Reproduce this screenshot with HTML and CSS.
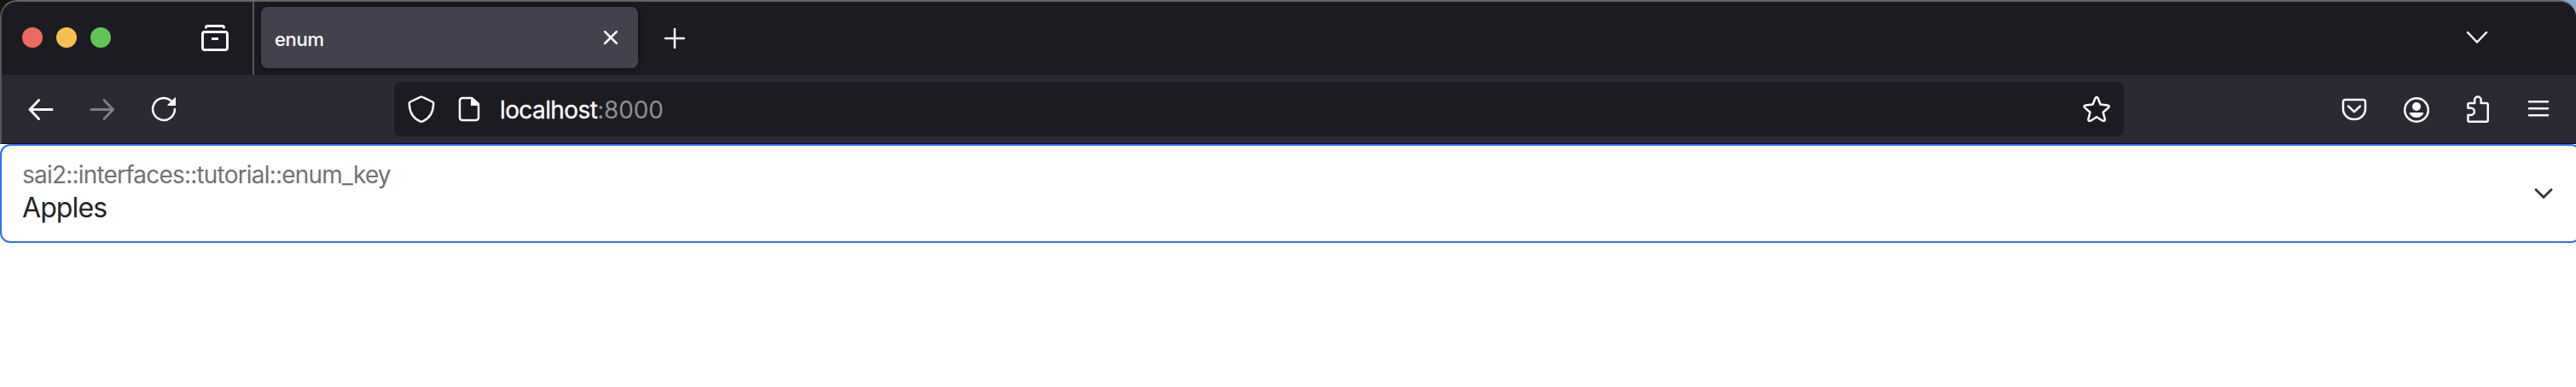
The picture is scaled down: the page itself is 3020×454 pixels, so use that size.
FILE: index.html
```html
<!DOCTYPE html>
<html lang="en">
<head>
<meta charset="utf-8">
<title>enum</title>
<link rel="stylesheet" href="styles.css">
</head>
<body>
<div class="browser">
  <header class="chrome">
    <div class="tabbar">
      <div class="lights"><i class="light red"></i><i class="light yellow"></i><i class="light green"></i></div>
      <svg class="icon library" viewBox="0 0 32 32"><path d="M5.500 4.200a1.800 1.800 0 0 1 1.800-1.700h17.400a1.800 1.800 0 0 1 1.800 1.700"/><rect x="1.500" y="9.500" width="29" height="21" rx="2.500"/><path class="butt" d="M12 17.500h8"/></svg>
      <div class="divider"></div>
      <div class="tab">
        <span class="tab-title">enum</span>
        <svg class="close" viewBox="0 0 16 16"><path d="M1 1l14 14M15 1L1 15"/></svg>
      </div>
      <svg class="plus" viewBox="0 0 24 24"><path d="M12 1v22M1 12h22"/></svg>
      <svg class="icon list" viewBox="0 0 32 32"><path d="M5 10l11 11.500L27 10"/></svg>
    </div>
    <nav class="navbar">
      <svg class="icon arrow" viewBox="0 0 32 32"><path d="M29 16.500H3M13.500 5.500L3 16.500L13.500 27.500"/></svg>
      <svg class="icon arrow disabled" viewBox="0 0 32 32"><path d="M3 16.500H28.500M18 5.500L28.500 16.500L18 27.500"/></svg>
      <svg class="icon reload" viewBox="0 0 32 32"><path d="M28.900 16A12.900 12.900 0 1 1 24.500 6.300"/><path class="solid" d="M30 2v10H21.500q-2 0-.6-1.500L28 3.500Q30 1.500 30 2z"/></svg>
      <div class="urlbar">
        <svg class="icon shield" viewBox="0 0 32 32"><path d="M16 1.500Q16.800 1.500 29 7.500Q30.500 8.500 30.200 10C29.800 19.500 25.500 27 17.500 30.300Q16 31 14.500 30.300C6.500 27 2.200 19.500 1.800 10Q1.500 8.500 3 7.500Q15.200 1.500 16 1.500z"/></svg>
        <svg class="icon doc" viewBox="0 0 32 32"><path d="M19 3H8a3 3 0 0 0-3 3v20a3 3 0 0 0 3 3h16a3 3 0 0 0 3-3V10z"/><path class="solid" d="M18 2.500v9.500h9.500v-2L20 2.500z"/></svg>
        <span class="url"><span class="host">localhost</span><span class="port">:8000</span></span>
        <svg class="icon star" viewBox="0 0 32 32"><path d="M14.400 3.200Q16 .600 17.600 3.200L20.500 10.500L28.800 11.400Q31.800 12 29.800 14.400L23.600 19.800L25.700 27.800Q26 30.900 23 29.700L16 25.200L9 29.700Q6 30.900 6.300 27.800L8.400 19.800L2.200 14.400Q.200 12 3.200 11.400L11.500 10.500z"/></svg>
      </div>
      <div class="actions">
        <svg class="icon" viewBox="0 0 32 32"><path d="M5.500 5h21A2.500 2.500 0 0 1 29 7.500V16A13 12 0 0 1 3 16V7.500A2.500 2.500 0 0 1 5.500 5z"/><path d="M9 12.500l7 6.700 7-6.700"/></svg>
        <svg class="icon" viewBox="0 0 32 32"><circle cx="17" cy="17" r="13.750"/><circle class="solid" cx="17" cy="13" r="5"/><path class="solid" d="M10 20h14q2 0 1 1.500Q22 26 17 26T9 21.500Q7.500 20 10 20z"/></svg>
        <svg class="icon" viewBox="0 0 32 32"><path d="M5.400 14.700V10.500A1.500 1.500 0 0 1 6.900 9H13.200V5.200a3.700 3.700 0 0 1 7.400 0V9H27.200A1.500 1.500 0 0 1 28.700 10.500V29.200A1.500 1.500 0 0 1 27.200 30.700H6.900A1.500 1.500 0 0 1 5.400 29.200V22.900H8.800a4.100 4.100 0 0 0 0-8.200z"/></svg>
        <svg class="icon menu" viewBox="0 0 32 32"><path d="M5 7.300h22M5 15.300h22M5 23.300h22"/></svg>
      </div>
    </nav>
  </header>
  <main class="page">
    <div class="select">
      <div class="field">
        <div class="label">sai2::interfaces::tutorial::enum_key</div>
        <div class="value">Apples</div>
      </div>
      <svg class="caret" viewBox="0 0 24 14"><path d="M3 2.500l9 9 9-9"/></svg>
    </div>
  </main>
</div>
</body>
</html>
```
FILE: styles.css
```css
* { box-sizing: border-box; }
body { margin: 0; background: #fff; font-family: Inter, "Liberation Sans", sans-serif; overflow: hidden; }
.browser { width: 3020px; height: 454px; overflow: hidden; background: linear-gradient(90deg, #14130c 50%, #86abd3 50%) 0 0 / 100% 60px no-repeat #fff; }
.chrome { height: 169px; border: 2px solid #56555b; border-top-color: #656568; border-right: 0; border-bottom: 1px solid #0c0c0d; border-radius: 20px 20px 0 0; background: #2b2a33; overflow: hidden; }
svg { display: block; flex: none; fill: none; stroke: #fbfbfe; stroke-width: 2.500px; stroke-linecap: round; stroke-linejoin: round; }
.solid { fill: #fbfbfe; stroke: none; }
.butt { stroke-linecap: butt; }
.icon { width: 32px; height: 32px; }
.tabbar { height: 86px; display: flex; align-items: center; background: #1c1b22; padding: 0 0 2px 24px; }
.lights { display: flex; gap: 16px; }
.light { width: 24px; height: 24px; border-radius: 50%; }
.red { background: #ed6a5e; }
.yellow { background: #f5bf4f; }
.green { background: #61c554; }
.library { margin-left: 106px; stroke-width: 3px; }
.divider { width: 2px; height: 86px; margin: 0 8px 0 28px; background: #58575c; align-self: flex-start; flex: none; }
.tab { width: 442px; height: 72px; padding: 0 24px 0 16px; display: flex; align-items: center; justify-content: space-between; background: #42414d; border-radius: 8px; box-shadow: 0 0 8px #0008; }
.tab-title { color: #fbfbfe; font-size: 22px; font-weight: 500; line-height: 28px; letter-spacing: -.3px; padding-top: 3px; }
.close { width: 16px; height: 16px; }
.plus { width: 24px; height: 24px; margin: 2px 0 0 31px; }
.list { margin-left: auto; margin-right: 100px; }
.navbar { height: 80px; display: flex; align-items: center; gap: 40px; padding: 0 28px 0 30px; }
.arrow { stroke-width: 3px; }
.disabled { opacity: .4; }
.urlbar { width: 2028px; height: 64px; margin-left: 214px; padding: 0 16px; display: flex; align-items: center; background: #1c1b22; border-radius: 8px; }
.doc { margin-left: 24px; }
.url { margin-left: 20px; padding-top: 2px; font-size: 28px; line-height: 36px; color: #fbfbfe; }
.host { letter-spacing: -.6px; -webkit-text-stroke: .3px #fbfbfe; }
.port { color: #8f8e93; letter-spacing: -.2px; }
.star { margin-left: auto; }
.actions { display: flex; gap: 40px; margin-left: auto; }
.page { background: #fff; }
.select { width: 3026px; height: 116px; border: 2px solid #2f6ff5; border-radius: 12px; padding: 16px 30px 0 24px; display: flex; justify-content: space-between; background: #fff; }
.label { color: #717276; font-size: 28px; line-height: 36px; letter-spacing: -.8px; }
.value { color: #212529; font-size: 32px; line-height: 40px; margin-top: 1px; letter-spacing: -.9px; }
.caret { width: 24px; height: 14px; margin-top: 33px; stroke: #343a40; stroke-width: 3px; }
```
